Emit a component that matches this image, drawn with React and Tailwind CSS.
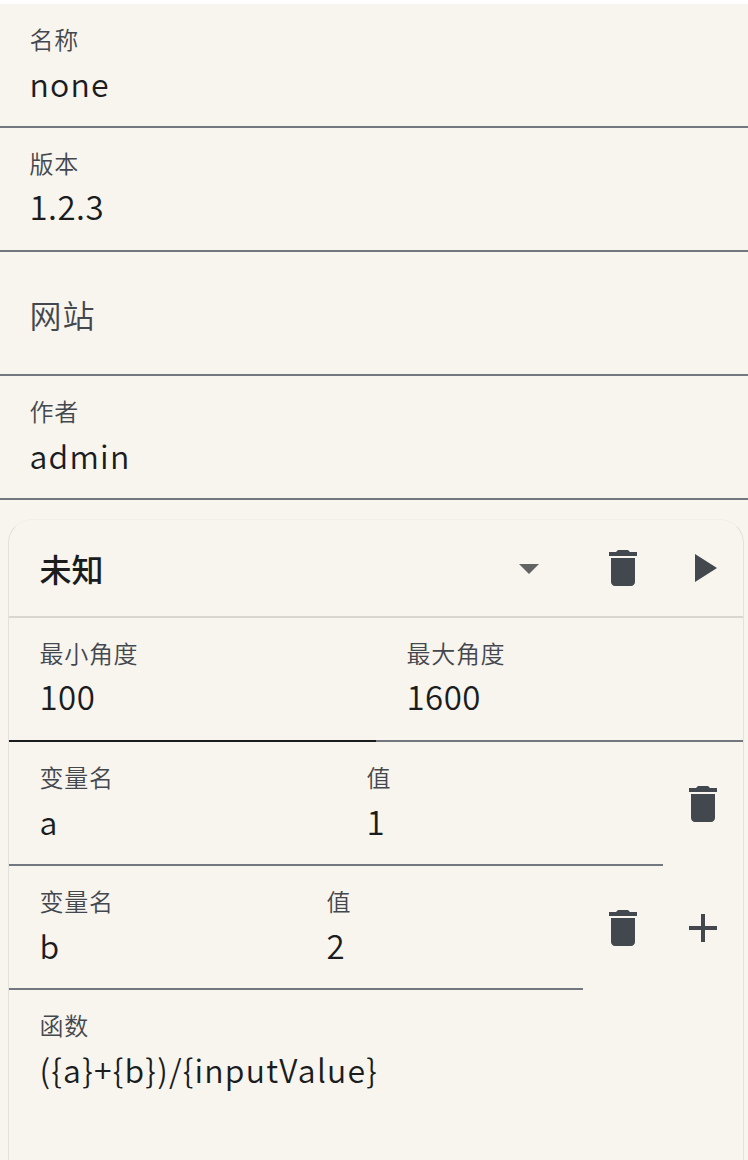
const Trash = () => (
  <svg viewBox="0 0 24 24" className="size-12 fill-[#43474e]"><path d="M6 19c0 1.1.9 2 2 2h8c1.1 0 2-.9 2-2V7H6v12zM19 4h-3.5l-1-1h-5l-1 1H5v2h14V4z" /></svg>
);

const latin = "mt-[3px] text-[32px] tracking-[1.2px]";
const digits = "mt-[2px] text-[33px] tracking-[0.5px]";
const digit = "mt-[3px] text-[33px] tracking-[0.5px]";

function Field({ label, value, className = "", line = "border-b-2 border-[#73777f]", pad = "pl-[29.5px]", type = latin }) {
  return (
    <div className={`h-[124px] pt-[17px] ${line} ${pad} ${className}`}>
      <div className="text-[24px] leading-[35px] tracking-[0.7px] text-[#43474e]">{label}</div>
      <div className={`${type} leading-[48px] text-[#1a1c1e]`}>{value}</div>
    </div>
  );
}

export default function App() {
  return (
    <div className="h-[1160px] overflow-hidden bg-[#f8f5ee] font-['Noto_Sans_CJK_SC',sans-serif] font-[350]">
      <div className="h-1 bg-white" />
      <Field label="名称" value="none" />
      <Field label="版本" value="1.2.3" type={digits} />
      <div className="flex h-[124px] items-center border-b-2 border-[#73777f] pt-px pl-[29.5px] text-[32px] tracking-[1px] text-[#43474e]">网站</div>
      <Field label="作者" value="admin" />
      <div className="mx-[8px] mt-[19px] h-[680px] w-[736px] rounded-t-[24px] border border-[#e3e1db] border-t-[#f2efe8]">
        <div className="flex h-[98px] items-center border-b-2 border-[#d9d6d0] pl-[30.5px]">
          <div className="grow text-[32px] font-medium text-[#1a1c1e]">未知</div>
          <svg viewBox="0 0 24 24" className="mr-[46px] size-12 fill-[#636363]"><path d="M7 10l5 5 5-5z" /></svg>
          <Trash />
          <svg viewBox="0 0 24 24" className="mr-[16px] ml-[32px] size-12 fill-[#43474e]"><path d="M8 5v14l11-7z" /></svg>
        </div>
        <div className="flex">
          <Field label="最小角度" value="100" type={digits} pad="pl-[30.5px]" className="w-[367px]" line="border-b-2 border-[#1a1c1e]" />
          <Field label="最大角度" value="1600" type={digits} pad="pl-[30.5px]" className="w-[367px]" />
        </div>
        <div className="flex">
          <Field label="变量名" value="a" pad="pl-[30.5px]" className="w-[327px]" />
          <Field label="值" value="1" type={digit} pad="pl-[30.5px]" className="w-[327px]" />
          <div className="flex h-[124px] w-20 items-center justify-center"><Trash /></div>
        </div>
        <div className="flex">
          <Field label="变量名" value="b" pad="pl-[30.5px]" className="w-[287px]" />
          <Field label="值" value="2" type={digit} pad="pl-[30.5px]" className="w-[287px]" />
          <div className="flex h-[124px] w-20 items-center justify-center"><Trash /></div>
          <div className="flex h-[124px] w-20 items-center justify-center">
            <svg viewBox="0 0 24 24" className="size-12 fill-[#43474e]"><path d="M19 13h-6v6h-2v-6H5v-2h6V5h2v6h6v2z" /></svg>
          </div>
        </div>
        <Field label="函数" value="({a}+{b})/{inputValue}" pad="pl-[30.5px]" line="" />
      </div>
    </div>
  );
}
